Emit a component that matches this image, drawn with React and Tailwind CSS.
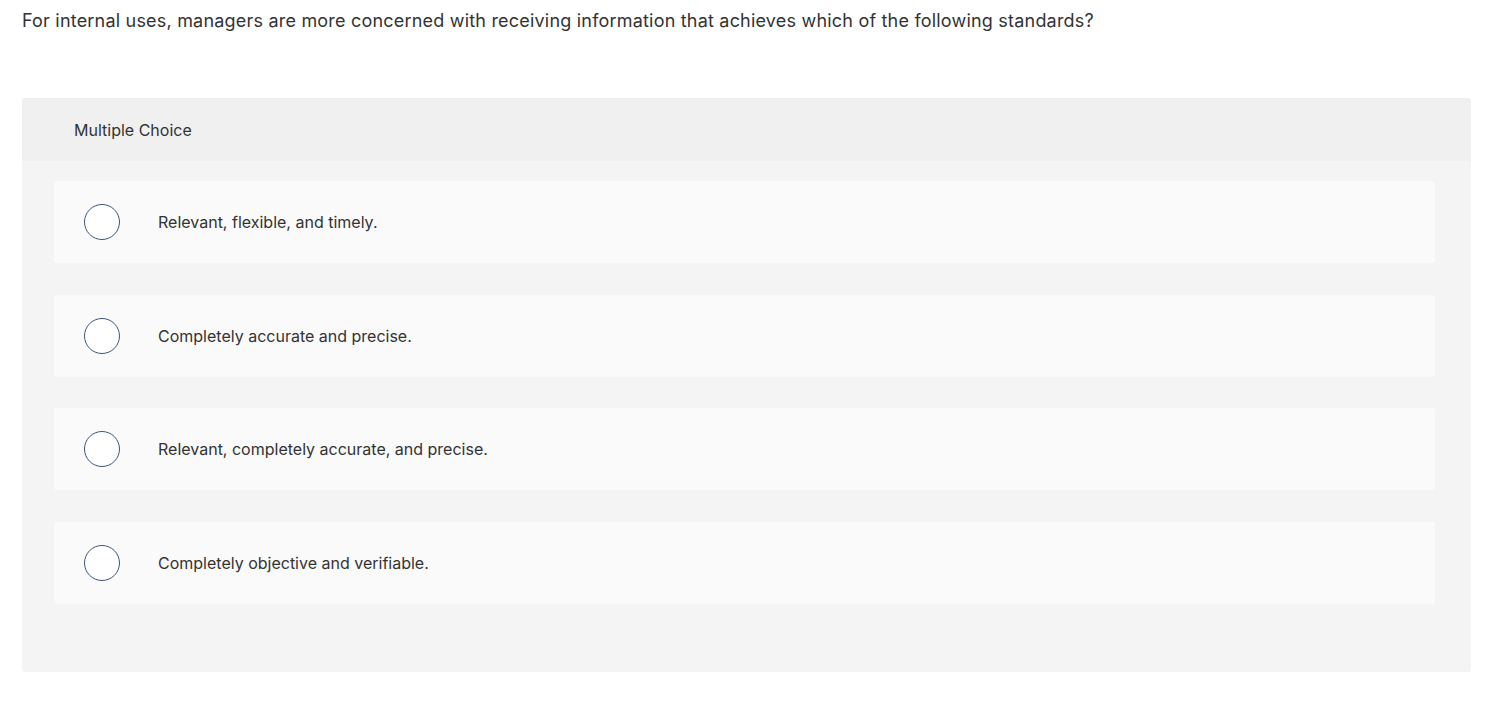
const options = [
  "Relevant, flexible, and timely.",
  "Completely accurate and precise.",
  "Relevant, completely accurate, and precise.",
  "Completely objective and verifiable.",
];

export default function App() {
  return (
    <div className="min-h-screen bg-white text-[#333] font-['Inter',sans-serif]">
      <p className="pl-[22px] pt-[9px] text-[18px] leading-[24px] tracking-[0.2px]">
        For internal uses, managers are more concerned with receiving information that achieves which of the following standards?
      </p>

      <div className="mx-[22px] mt-[65px] w-[1449px] rounded-[3px] bg-[#f4f4f4]">
        <div className="h-[63px] flex items-center pl-[52px] bg-[#f0f0f0] rounded-t-[3px] text-[16px]">
          Multiple Choice
        </div>
        <div className="flex flex-col gap-[31.5px] pt-[20px] pb-[68px] pl-[32px] pr-[36px]">
          {options.map((opt, i) => (
            <div key={i} className="h-[82px] flex items-center bg-[#fafafa] rounded-[3px]">
              <div className="ml-[30px] w-[36px] h-[36px] rounded-full border-[1.5px] border-[#3a5677] bg-white"></div>
              <span className="ml-[38px] text-[16px]">{opt}</span>
            </div>
          ))}
        </div>
      </div>
    </div>
  );
}
